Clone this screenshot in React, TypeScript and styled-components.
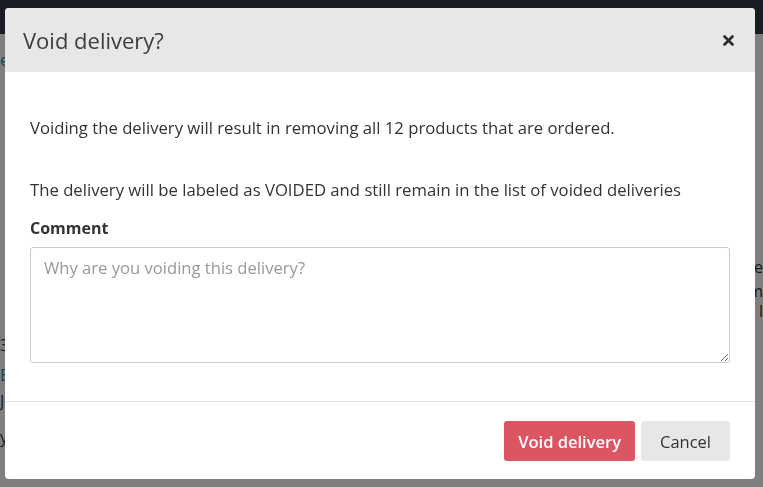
import styled, { createGlobalStyle } from "styled-components";

const GlobalStyle = createGlobalStyle`
  html, body {
    margin: 0;
    padding: 0;
    height: 100%;
    overflow: hidden;
  }
  body {
    font-family: "Open Sans", "Noto Sans", sans-serif;
    background: #ffffff;
    color: #333;
  }
`;

const Page = styled.div`
  width: 763px;
  height: 487px;
  display: flex;
  flex-direction: column;
`;

const NavBar = styled.div`
  height: 34px;
  background: #323845;
`;

const PageBody = styled.div`
  flex: 1;
  display: flex;
  flex-direction: column;
  padding: 14px 0 0 0;
  font-size: 16px;
`;

const PageRow = styled.div<{ $color?: string; $h?: number }>`
  display: flex;
  justify-content: space-between;
  height: ${(p) => p.$h ?? 24}px;
  line-height: 24px;
  color: ${(p) => p.$color || "#333"};
`;

const Overlay = styled.div`
  position: fixed;
  inset: 0;
  background: rgba(0, 0, 0, 0.5);
  padding: 8px 0 0 5px;
`;

const Modal = styled.div`
  width: 750px;
  background: #fff;
  border-radius: 4px;
  overflow: hidden;
`;

const Header = styled.div`
  height: 64px;
  background: #e7e7e7;
  display: flex;
  align-items: center;
  justify-content: space-between;
  padding: 0 20px 0 18px;
`;

const Title = styled.h4`
  margin: 0;
  font-size: 22px;
  font-weight: 400;
  color: #3d3d3d;
`;

const Close = styled.button`
  border: none;
  background: none;
  padding: 0;
  width: 14px;
  height: 14px;
  display: flex;
  align-items: center;
  justify-content: center;
  cursor: pointer;
`;

const Body = styled.div`
  padding: 44px 25px 38px 25px;
  font-size: 16.7px;
  line-height: 24px;
  color: #333;
`;

const Text = styled.p<{ $gap?: number }>`
  margin: 0 0 ${(p) => p.$gap ?? 0}px 0;
`;

const Label = styled.label`
  display: block;
  font-size: 16px;
  font-weight: 700;
  margin-bottom: 7px;
  color: #333;
`;

const Comment = styled.textarea`
  display: block;
  width: 100%;
  height: 116px;
  box-sizing: border-box;
  border: 1px solid #ccc;
  border-radius: 3px;
  padding: 8px 13px;
  font-family: inherit;
  font-size: 16.6px;
  line-height: 24px;
  color: #333;
  resize: vertical;
  outline: none;
  &::placeholder {
    color: #999;
  }
`;

const Footer = styled.div`
  border-top: 1px solid #e5e5e5;
  padding: 19px 25px 18px 25px;
  display: flex;
  justify-content: flex-end;
  gap: 6px;
`;

const Button = styled.button<{ $primary?: boolean }>`
  height: 40px;
  padding: 0 ${(p) => (p.$primary ? 14 : 19)}px;
  border: none;
  border-radius: 3px;
  font-family: inherit;
  font-size: 16.5px;
  background: ${(p) => (p.$primary ? "#dc5563" : "#e7e7e7")};
  color: ${(p) => (p.$primary ? "#fff" : "#333")};
  font-weight: ${(p) => (p.$primary ? 600 : 400)};
  cursor: pointer;
`;

export default function App() {
  return (
    <>
      <GlobalStyle />
      <Page>
        <NavBar />
        <PageBody>
          <PageRow $color="#1a8aa0" $h={207}>
            <span>e</span>
            <span />
          </PageRow>
          <PageRow>
            <span />
            <span>e</span>
          </PageRow>
          <PageRow $h={20}>
            <span />
            <span>m</span>
          </PageRow>
          <PageRow $h={34}>
            <span />
            <span>l</span>
          </PageRow>
          <PageRow $h={30}>
            <span>3</span>
          </PageRow>
          <PageRow $color="#1a8aa0" $h={26}>
            <span>B</span>
          </PageRow>
          <PageRow $h={36}>
            <span>J</span>
          </PageRow>
          <PageRow>
            <span>y</span>
          </PageRow>
        </PageBody>
      </Page>
      <Overlay>
        <Modal>
          <Header>
            <Title>Void delivery?</Title>
            <Close aria-label="Close">
              <svg width="11" height="11" viewBox="0 0 11 11">
                <path
                  d="M1.5 1.5 L9.5 9.5 M9.5 1.5 L1.5 9.5"
                  stroke="#2b2b2b"
                  strokeWidth="2.6"
                  strokeLinecap="round"
                />
              </svg>
            </Close>
          </Header>
          <Body>
            <Text $gap={38}>
              Voiding the delivery will result in removing all 12 products that are ordered.
            </Text>
            <Text $gap={14}>
              The delivery will be labeled as VOIDED and still remain in the list of voided deliveries
            </Text>
            <Label htmlFor="comment">Comment</Label>
            <Comment id="comment" placeholder="Why are you voiding this delivery?" />
          </Body>
          <Footer>
            <Button $primary>Void delivery</Button>
            <Button>Cancel</Button>
          </Footer>
        </Modal>
      </Overlay>
    </>
  );
}
